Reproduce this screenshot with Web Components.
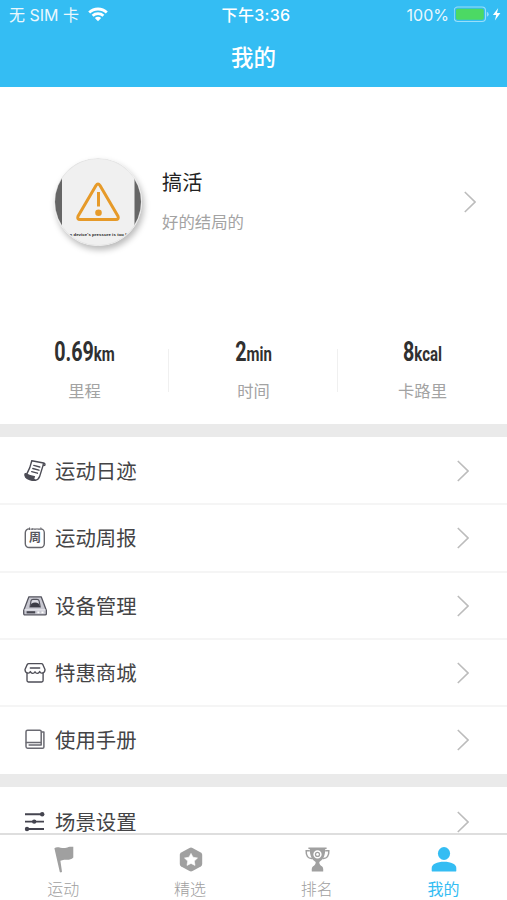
<!DOCTYPE html>
<html lang="zh-CN">
<head>
<meta charset="utf-8">
<meta name="viewport" content="width=device-width, initial-scale=1">
<title>我的</title>
<style>
    body {
        margin: 0;
        font-family: "Noto Sans CJK SC", sans-serif;
        background: #fff;
        overflow: hidden;
        --brand: #34bdf3;
        --text-color: #444446;
        --muted: #a3a3a3;
    }
</style>
</head>
<body>
<mine-page>
    <status-bar slot="header" carrier="无 SIM 卡" time="下午3:36" battery="100%"></status-bar>
    <nav-title slot="header">我的</nav-title>
    <user-profile name="搞活" bio="好的结局的"></user-profile>
    <stats-row>
        <stat-item value="0.69" unit="km">里程</stat-item>
        <stat-item value="2" unit="min">时间</stat-item>
        <stat-item value="8" unit="kcal">卡路里</stat-item>
    </stats-row>
    <menu-group>
        <menu-item icon="log">运动日迹</menu-item>
        <menu-item icon="week">运动周报</menu-item>
        <menu-item icon="device">设备管理</menu-item>
        <menu-item icon="shop">特惠商城</menu-item>
        <menu-item icon="book">使用手册</menu-item>
    </menu-group>
    <menu-group>
        <menu-item icon="sliders">场景设置</menu-item>
    </menu-group>
    <tab-bar slot="footer">
        <tab-item icon="flag">运动</tab-item>
        <tab-item icon="star">精选</tab-item>
        <tab-item icon="cup">排名</tab-item>
        <tab-item icon="user" active>我的</tab-item>
    </tab-bar>
</mine-page>

<script>
const ICONS = {
    // menu icons, 24x24
    log: `<g fill="none" stroke="#4c4c55" stroke-width="1.4" stroke-linejoin="round" stroke-linecap="round">
            <path d="M8.8 1.8L6.8 8.6 3.6 15.4M8.8 1.8L20.6 4Q22.4 4.6 21.8 6.4L20 6.6 16.6 17.6Q15.4 21 12.2 21.2M20.4 4.4L20 6.6"/>
            <path d="M2.2 14.6C5.4 16.2 8.6 17.4 11.4 17.8 10.2 19 10.4 20.6 12.2 21.3 8.8 21.6 4 20 2.6 18 1.7 16.8 1.7 15.4 2.2 14.6z" fill="#4c4c55"/>
            <path d="M10.8 6.4L16.8 8M9.8 9.5L15.9 11.2M8.7 12.6L14.4 14.2"/></g>`,
    week: `<rect x="2.3" y="2.9" width="19" height="18.6" rx="3.8" fill="none" stroke="#66666c" stroke-width="1.4"/>
           <path d="M6.5 2.9h11.5" stroke="#fff" stroke-width="2"/>
           <path d="M6.5 1.6v2.4M10 1.9v2M14 1.9v2M17.8 1.6v2.4M7.5 3.1h2M11 3.1h2M15 3.1h2" stroke="#66666c" stroke-width="1.1"/>
           <text x="11.9" y="16.4" text-anchor="middle" font-size="12" font-weight="700" fill="#55555c">周</text>`,
    device: `<path d="M5.9 2.8H18.2L23.4 16.6V19.6Q23.4 20.8 22.2 20.8H1.8Q.7 20.8 .7 19.6V16.6z" fill="#c8c8d1" stroke="#55555f" stroke-width="1.3" stroke-linejoin="round"/>
             <path d="M1.4 15.9H22.6" stroke="#f0f0f4" stroke-width="1"/>
             <path d="M7 13L8 6.8Q8.4 5.4 10 5.4H14Q15.7 5.4 16.1 6.8L17.2 13z" fill="#dcdce3" stroke="#55555f" stroke-width="1.2"/>
             <path d="M7 13L8.3 9.8Q12 7.4 15.9 9.8L17.2 13z" fill="#3c3c45"/>
             <path d="M3.6 18.3H12.2" stroke="#484852" stroke-width="2.2"/>
             <path d="M14.4 18.4h2M18.5 18.4h2" stroke="#fff" stroke-width="1.8"/>`,
    shop: `<g fill="none" stroke="#4e4e57" stroke-width="1.35" stroke-linejoin="round" stroke-linecap="round">
            <path d="M5.7 2.6H18.5Q19.3 2.6 19.8 3.4L22 8.5C22 12.4 17.7 13.3 16.7 10.5 15.6 12.9 13.2 13.1 12 10.8 10.8 13.1 8.4 12.9 7.3 10.5 6.3 13.3 2 12.4 2 8.5L4.3 3.4Q4.8 2.6 5.7 2.6z"/>
            <path d="M7.3 7H16.7M4 12.4V19.6Q4 21 5.4 21H18.7Q20.1 21 20.1 19.6V12.4"/></g>`,
    book: `<g fill="none" stroke="#6a6a72" stroke-width="1.5" stroke-linejoin="round">
            <path d="M4.6 2.2H16.8Q18.2 2.2 18.2 3.6V14.6H3V3.8Q3 2.2 4.6 2.2z"/>
            <path d="M3 14.6V18.6Q3 20.2 4.6 20.2H19.6Q20.9 20.2 20.9 18.9V4H18.2M18.2 14.6V17H5.6"/></g>`,
    sliders: `<path d="M2 4.3H20M2 11.6H21M3 19H21" stroke="#44444f" stroke-width="1.9"/>
              <circle cx="19.2" cy="4.3" r="2.2" fill="#44444f"/><circle cx="11.2" cy="11.6" r="2.2" fill="#44444f"/><circle cx="4" cy="19" r="2.2" fill="#44444f"/>`,
    // tab icons, 28x28
    flag: `<path d="M5.4 3.2C9 .6 14 5 19.5 2 20.8 1.6 22.6 1.6 24.3 1.8V12.4C20.6 16.4 16.5 13.2 11.4 15.8L13 26.8Q12 27.8 10.8 27.1z"/>`,
    star: `<path d="M13.5 2.9Q15 2.1 16.5 2.9L24.8 7.4Q26.2 8.2 26.2 9.8V19Q26.2 20.6 24.8 21.4L16.5 26Q15 26.8 13.5 26L5.2 21.4Q3.8 20.6 3.8 19V9.8Q3.8 8.2 5.2 7.4z"/>
           <path d="M15 8.4L17 12.2 21.5 13 18.3 16.1 19 20.4 15 18.4 11 20.4 11.7 16.1 8.5 13 13 12.2z" fill="#fff" stroke="#fff" stroke-width=".6" stroke-linejoin="round"/>`,
    cup: `<path d="M5.4 2.4H23.6V4.1H22.2C22.3 10.9 20 15.1 16.3 16.9 16.3 19 17.2 20 18.8 21.2 20.2 22.1 20.4 23.7 20.2 26.4H8.8C8.6 23.7 8.8 22.1 10.2 21.2 11.8 20 12.7 19 12.7 16.9 9 15.1 6.7 10.9 6.8 4.1H5.4z"/>
          <path d="M6.8 5.8H3.2C2.9 10.8 5 13.8 9.3 13.4M22.2 5.8H25.8C26.1 10.8 24 13.8 19.7 13.4" fill="none" stroke="currentColor" stroke-width="1.5"/>
          <circle cx="14.5" cy="9.4" r="3.4" fill="none" stroke="#fff" stroke-width="1.5"/><circle cx="14.5" cy="9.4" r="1.3" fill="#fff"/>`,
    user: `<ellipse cx="14" cy="8.5" rx="6.1" ry="6.4"/><path d="M1.7 26V23C1.7 19.2 7 16.8 14 16.8S26.3 19.2 26.3 23V26Q26.3 26.4 25.8 26.4H2.2Q1.7 26.4 1.7 26z"/>`
};

const CHEVRON = `<svg class="chevron" width="12" height="22" viewBox="0 0 12 22" fill="none" stroke="#bcbcbc" stroke-width="1.6"><path d="M.8 1L11 11 .8 21"/></svg>`;

class MinePage extends HTMLElement {
    constructor() {
        super();
        this.attachShadow({ mode: 'open' }).innerHTML = `
            <style>
                :host { display: flex; flex-direction: column; height: 900px; }
                header { flex: none; height: 87px; background: var(--brand); color: #fff; }
                main { flex: 1; min-height: 0; overflow: hidden; }
            </style>
            <header><slot name="header"></slot></header>
            <main><slot></slot></main>
            <slot name="footer"></slot>
        `;
    }
}

class StatusBar extends HTMLElement {
    constructor() {
        super();
        this.attachShadow({ mode: 'open' }).innerHTML = `
            <style>
                :host {
                    display: grid;
                    grid-template-columns: 1fr auto 1fr;
                    align-items: center;
                    height: 30px;
                    padding: 0 6px 0 9px;
                    font: 16px/30px Inter, "Noto Sans CJK SC", sans-serif;
                }
                div { display: flex; align-items: center; }
                .left { gap: 9px; }
                .left span, .right span { opacity: .9; }
                .time { font-weight: 500; letter-spacing: .3px; padding-left: 2px; }
                .right { justify-content: flex-end; gap: 5px; }
                svg { display: block; margin-top: -1px; }
            </style>
            <div class="left">
                <span>${this.getAttribute('carrier')}</span>
                <svg width="20" height="15" viewBox="0 0 20 15" fill="none" stroke="#fff" stroke-width="2.8">
                    <path d="M1.2 5.5C6.1 .8 13.9 .8 18.8 5.5M4.6 8.8C7.6 6 12.4 6 15.4 8.8"/>
                    <path d="M6.8 11C8.6 9.4 11.4 9.4 13.2 11L10 14.2z" fill="#fff" stroke="none"/>
                </svg>
            </div>
            <div class="time">${this.getAttribute('time')}</div>
            <div class="right">
                <span>${this.getAttribute('battery')}</span>
                <svg width="47" height="17" viewBox="0 0 47 17">
                    <rect x=".2" y="1" width="31.3" height="14.5" rx="3.5" fill="none" stroke="#fff" stroke-opacity=".5" stroke-width="1.1"/>
                    <rect x="1.9" y="2.7" width="27.9" height="11.1" rx="1.8" fill="#4cd964"/>
                    <path d="M32.9 5.8Q34.7 6.4 34.7 8.3T32.9 10.7z" fill="#fff" fill-opacity=".5"/>
                    <path d="M44.2 1.9L38.9 9H42.2L40.9 14.6 46.4 7.1H43z" fill="#fff"/>
                </svg>
            </div>
        `;
    }
}

class NavTitle extends HTMLElement {
    constructor() {
        super();
        this.attachShadow({ mode: 'open' }).innerHTML = `
            <style>
                :host { display: block; height: 57px; line-height: 52px; font-size: 22.5px; font-weight: 500; text-align: center; }
            </style>
            <slot></slot>
        `;
    }
}

class UserProfile extends HTMLElement {
    constructor() {
        super();
        this.attachShadow({ mode: 'open' }).innerHTML = `
            <style>
                :host {
                    display: flex;
                    align-items: center;
                    box-sizing: border-box;
                    height: 231px;
                    padding: 0 31px 2px 54px;
                }
                .avatar {
                    width: 88px;
                    height: 88px;
                    border-radius: 50%;
                    box-shadow: 2px 4px 6px rgba(0, 0, 0, .27);
                    flex: none;
                }
                .info { flex: 1; padding-left: 20px; }
                .name { font-size: 20.2px; line-height: 40px; color: #222; }
                .bio { font-size: 16.4px; line-height: 39px; padding-bottom: 1px; color: var(--muted); }
            </style>
            <svg class="avatar" viewBox="0 0 88 88">
                <clipPath id="round"><circle cx="44" cy="44" r="43"/></clipPath>
                <circle cx="44" cy="44" r="44" fill="#e5e5e5"/>
                <g clip-path="url(#round)">
                    <rect width="88" height="88" fill="#f0f0f0"/>
                    <rect width="8" height="88" fill="#666"/>
                    <rect x="80.5" width="8" height="88" fill="#666"/>
                    <path d="M42 27.5Q44 24.5 46 27.5L64 58.3Q65 61.6 62 61.6H26Q23 61.6 24 58.3z" fill="none" stroke="#e69a29" stroke-width="3" stroke-linejoin="round"/>
                    <path d="M44.5 34V48.5" stroke="#e69a29" stroke-width="3"/>
                    <circle cx="44.5" cy="54.8" r="3.3" fill="#e69a29"/>
                    <text x="44" y="78.4" text-anchor="middle" textLength="57" font-family="Liberation Sans, sans-serif" font-size="4.3" font-weight="700" fill="#222">n device's pressure is too l</text>
                </g>
            </svg>
            <div class="info">
                <div class="name">${this.getAttribute('name')}</div>
                <div class="bio">${this.getAttribute('bio')}</div>
            </div>
            ${CHEVRON}
        `;
    }
}

class StatsRow extends HTMLElement {
    constructor() {
        super();
        this.attachShadow({ mode: 'open' }).innerHTML = `
            <style>
                :host { display: grid; grid-template-columns: repeat(3, 1fr); height: 106px; }
                ::slotted(:not(:last-child)) {
                    background: linear-gradient(#f0f0f0, #f0f0f0) right 31px / 1px 43px no-repeat;
                }
            </style>
            <slot></slot>
        `;
    }
}

class StatItem extends HTMLElement {
    constructor() {
        super();
        this.attachShadow({ mode: 'open' }).innerHTML = `
            <style>
                :host { display: block; text-align: center; padding-top: 18px; }
                .value {
                    font: 700 27px/32px Roboto, sans-serif;
                    color: #303030;
                    white-space: nowrap;
                    transform: scaleX(.73);
                }
                small { font-size: 20.5px; }
                .label { font-size: 16.3px; line-height: 24px; color: var(--muted); margin-top: 8px; }
            </style>
            <div class="value">${this.getAttribute('value')}<small>${this.getAttribute('unit')}</small></div>
            <div class="label"><slot></slot></div>
        `;
    }
}

class MenuGroup extends HTMLElement {
    constructor() {
        super();
        this.attachShadow({ mode: 'open' }).innerHTML = `
            <style>
                :host { display: block; border-top: 13px solid #eaeaea; padding-top: 1px; }
                ::slotted(:not(:last-child)) { border-bottom: 2px solid #f5f5f5; }
            </style>
            <slot></slot>
        `;
    }
}

class MenuItem extends HTMLElement {
    constructor() {
        super();
        this.attachShadow({ mode: 'open' }).innerHTML = `
            <style>
                :host {
                    display: flex;
                    align-items: center;
                    box-sizing: border-box;
                    height: 67.3px;
                    padding: 1px 38px 0 23px;
                    font-size: 20.4px;
                    color: var(--text-color);
                }
                :host(:last-child) { padding-bottom: 2px; }
                .label { flex: 1; padding: 0 0 2px 8px; line-height: 30px; }
            </style>
            <svg width="24" height="24" viewBox="0 0 24 24">${ICONS[this.getAttribute('icon')]}</svg>
            <div class="label"><slot></slot></div>
            ${CHEVRON}
        `;
    }
}

class TabBar extends HTMLElement {
    constructor() {
        super();
        this.attachShadow({ mode: 'open' }).innerHTML = `
            <style>
                :host {
                    display: grid;
                    grid-template-columns: repeat(4, 1fr);
                    flex: none;
                    box-sizing: border-box;
                    height: 67px;
                    border-top: 2px solid #dedede;
                    background: #fff;
                }
            </style>
            <slot></slot>
        `;
    }
}

class TabItem extends HTMLElement {
    constructor() {
        super();
        this.attachShadow({ mode: 'open' }).innerHTML = `
            <style>
                :host {
                    display: flex;
                    flex-direction: column;
                    align-items: center;
                    padding-top: 10px;
                    font-size: 16px;
                    line-height: 24px;
                    color: #a0a0a0;
                }
                :host([active]) { color: var(--brand); }
                svg { display: block; margin-bottom: 3px; }
                .label { font-weight: 300; }
                :host([active]) .label { font-weight: 400; }
            </style>
            <svg width="28" height="28" viewBox="0 0 28 28" fill="currentColor">${ICONS[this.getAttribute('icon')]}</svg>
            <div class="label"><slot></slot></div>
        `;
    }
}

customElements.define('mine-page', MinePage);
customElements.define('status-bar', StatusBar);
customElements.define('nav-title', NavTitle);
customElements.define('user-profile', UserProfile);
customElements.define('stats-row', StatsRow);
customElements.define('stat-item', StatItem);
customElements.define('menu-group', MenuGroup);
customElements.define('menu-item', MenuItem);
customElements.define('tab-bar', TabBar);
customElements.define('tab-item', TabItem);
</script>
</body>
</html>
